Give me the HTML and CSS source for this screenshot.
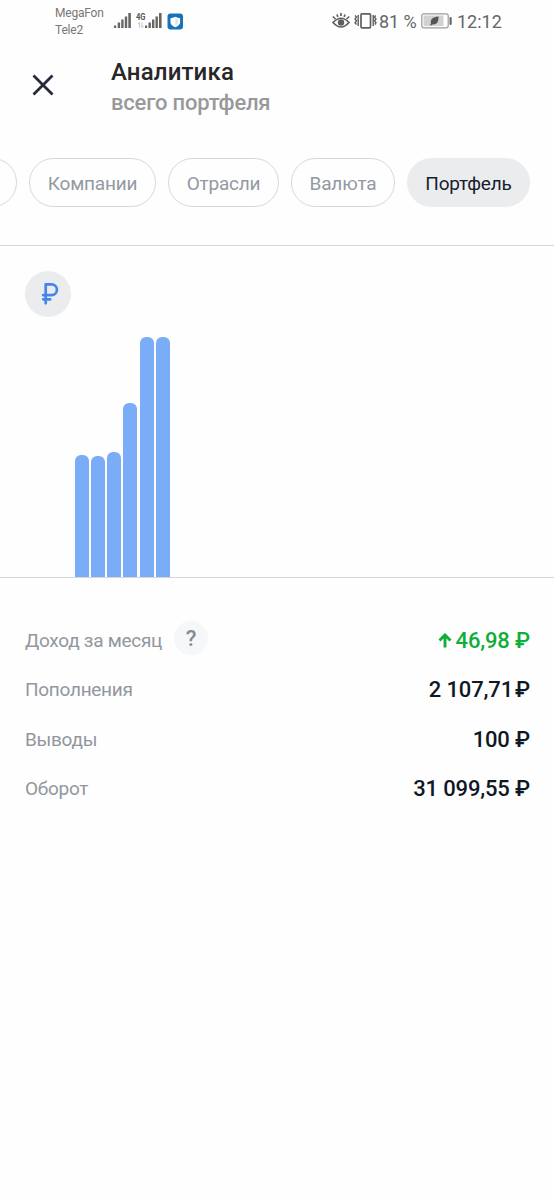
FILE: index.html
```html
<!DOCTYPE html>
<html lang="ru">
<head>
<meta charset="utf-8">
<meta name="viewport" content="width=device-width, initial-scale=1">
<title>Аналитика</title>
<link rel="stylesheet" href="styles.css">
</head>
<body>
<div class="status">
  <div class="carriers"><span>MegaFon</span><span>Tele2</span></div>
  <svg class="signals" width="72" height="20" viewBox="0 0 72 20">
    <g fill="#666">
      <path d="M0 15.500h2.200V18H0zM3.700 12.500h2.400V18H3.700zM7.200 9.500h2.400V18H7.200zM10.800 6.500h2.400V18h-2.400zM14.300 3h2.600v15h-2.600z"/>
      <path d="M31 15.500h2.200V18H31zM34.500 12.500h2.400V18h-2.400zM38 9.500h2.400V18H38zM41.500 6.500h2.400V18h-2.400zM45 3h2.600v15H45z"/>
    </g>
    <text class="net" x="22" y="9.500" textLength="9.500" lengthAdjust="spacingAndGlyphs">4G</text>
    <path d="M25.500 17.500v-5L24 14M28 12.500v5l1.500-1.500" fill="none" stroke="#c4c4c4"/>
    <rect x="53.500" y="3.500" width="15.500" height="16" rx="3" fill="#1673b8"/>
    <path d="M61.300 6.700q2.500 1.400 4.800 1.500v4q0 2.900-4.800 5-4.800-2.100-4.800-5v-4q2.300-.1 4.800-1.500z" fill="#fff"/>
    <path d="M61.300 8.500v6.800q2.800-1.500 2.800-3.800V9.700z" fill="#d3e5f2"/>
  </svg>
  <svg class="modes" width="46" height="20" viewBox="0 0 46 20">
    <g fill="none" stroke="#606060" stroke-width="1.700">
      <path d="M1 12.500q8-8.500 16 0-8 9-16 0z"/>
      <path d="M.8 6.500l2.700 2.500M5 4.500l.8 2.500M9 3v3M13 4.500l-.8 2.500M17.200 6.500L14.500 9"/>
      <rect x="29" y="3.800" width="9.500" height="14" rx="1"/>
      <path d="M23 5.500l1.500 1.600L23 9l1.500 1.800L23 12.700l1.500 1.800M26.200 5v11M41.200 5v11M43.700 5.500l-1.200 1.600L44 9l-1.500 1.800 1.500 1.900-1.200 1.800" stroke-width="1.400"/>
    </g>
    <circle cx="9" cy="12.500" r="3.200" fill="#606060"/>
  </svg>
  <span class="percent">81 %</span>
  <svg class="battery" width="31" height="16" viewBox="0 0 31 16">
    <rect x=".8" y=".8" width="26.400" height="14" rx="2" fill="#fff" stroke="#9a9a9a" stroke-width="1.200"/>
    <rect x="2.500" y="2.500" width="20" height="10.600" fill="#d2d2d2"/>
    <rect x="28.500" y="4" width="2.200" height="8" rx="1" fill="#666"/>
    <path d="M9.200 12.500c0-1 .3-1.500.8-2C9 6 12 4 17.500 3.500c.3 5-1.500 8.500-6.300 7.900-.6.200-.8.600-1 1.100z" fill="#555"/>
  </svg>
  <span class="clock">12:12</span>
</div>
<header class="header">
  <svg class="close" width="22" height="22" viewBox="0 0 22 22"><path d="M1.500 1.500l19 19M20.500 1.500l-19 19" stroke="#252b3b" stroke-width="2.800"/></svg>
  <div class="titles"><h1>Аналитика</h1><p>всего портфеля</p></div>
</header>
<nav class="tabs">
  <span class="tab tab-first"></span>
  <span class="tab tab-companies">Компании</span>
  <span class="tab tab-sectors">Отрасли</span>
  <span class="tab tab-currency">Валюта</span>
  <span class="tab tab-active">Портфель</span>
</nav>
<section class="chart">
  <div class="currency">
    <svg width="46" height="46" viewBox="0 0 46 46"><path d="M20.700 32.300V13.300H26.500a5.400 5.400 0 0 1 0 10.900h-8.300M18.200 28.300h7" fill="none" stroke="#4585e8" stroke-width="2.700" stroke-linecap="round" stroke-linejoin="round"/></svg>
  </div>
  <div class="bars">
    <i style="height:122px"></i><i style="height:121.500px"></i><i style="height:125px"></i><i style="height:174.500px"></i><i style="height:240.500px"></i><i style="height:240.500px"></i>
  </div>
</section>
<main class="stats">
  <div class="row"><span class="label">Доход за месяц</span><span class="help">?</span>
    <span class="value gain"><svg width="14" height="16" viewBox="0 0 14 16"><path d="M7 14.500V2M1.500 7.500L7 2l5.500 5.500" fill="none" stroke="#0fae38" stroke-width="2.900"/></svg><span>46,98 ₽</span></span></div>
  <div class="row"><span class="label">Пополнения</span><span class="value"><span>2 107,71<span class="tight">₽</span></span></span></div>
  <div class="row"><span class="label">Выводы</span><span class="value">100 ₽</span></div>
  <div class="row"><span class="label">Оборот</span><span class="value">31 099,55 ₽</span></div>
</main>
</body>
</html>
```
FILE: styles.css
```css
* { box-sizing: border-box; }
body { margin: 0; width: 554px; height: 1200px; overflow: hidden; background: #fefefe; font-family: Roboto, sans-serif; }
svg { display: block; flex: none; }
.status { display: flex; height: 45px; padding: 5px 0 0 55px; color: #666; }
.carriers { display: flex; flex-direction: column; width: 59px; font-size: 12px; line-height: 16.5px; letter-spacing: -.2px; color: #777; }
.signals { margin-top: 5px; }
.net { font-size: 9.5px; font-weight: 700; fill: #555; }
.modes { margin: 5px 0 0 146px; }
.percent { width: 42px; margin-left: 1px; font-size: 18px; line-height: 33px; letter-spacing: -.1px; white-space: nowrap; }
.battery { margin-top: 8px; }
.clock { margin-left: 5px; font-size: 18px; line-height: 33px; }
.header { display: flex; height: 112px; padding-left: 32px; }
.close { margin-top: 29px; }
.titles { margin: 11px 0 0 57px; }
h1, p { margin: 0; font-weight: 500; white-space: nowrap; }
h1 { color: #272727; font-size: 24px; line-height: 32px; letter-spacing: .15px; }
p { color: #999; font-size: 22px; line-height: 30px; letter-spacing: -.2px; }
.tabs { display: flex; gap: 12px; height: 89px; padding-top: 1px; border-bottom: 1px solid #d5d7da; overflow: hidden; }
.tab { flex: none; display: flex; justify-content: center; align-items: center; height: 49px; padding-top: 2px; border: 1px solid #d5d7d9; border-radius: 25px; color: #9299a2; font-size: 19px; letter-spacing: -.2px; white-space: nowrap; }
.tab-first { width: 80px; margin-left: -63px; }
.tab-companies { width: 127px; }
.tab-sectors { width: 111px; }
.tab-currency { width: 104px; }
.tab-active { width: 123px; border-color: #ebeced; background: #ebeced; color: #17202d; }
.chart { display: flex; align-items: flex-end; height: 332px; border-bottom: 1px solid #d5d7da; }
.currency { align-self: flex-start; width: 46px; height: 46px; margin: 25px 0 0 25px; border-radius: 50%; background: #ebeced; }
.bars { display: flex; align-items: flex-end; gap: 2.300px; margin-left: 3.500px; }
.bars i { width: 14px; border-radius: 6px 6px 0 0; background: #7aacf8; }
.stats { display: flex; flex-direction: column; padding: 38px 24px 0 25px; }
.row { display: flex; align-items: center; height: 49.300px; }
.label { color: #92979e; font-size: 19px; letter-spacing: -.28px; white-space: nowrap; }
.help { display: flex; align-items: center; justify-content: center; width: 34px; height: 34px; margin: -5px 0 0 12px; border-radius: 50%; background: #f5f7f9; color: #858b93; font-size: 22px; font-weight: 500; }
.value { display: flex; align-items: center; gap: 4px; margin-left: auto; color: #101825; font-size: 22px; font-weight: 500; letter-spacing: -.15px; white-space: nowrap; }
.gain { color: #0fae38; }
.tight { margin-left: 2px; }
```
